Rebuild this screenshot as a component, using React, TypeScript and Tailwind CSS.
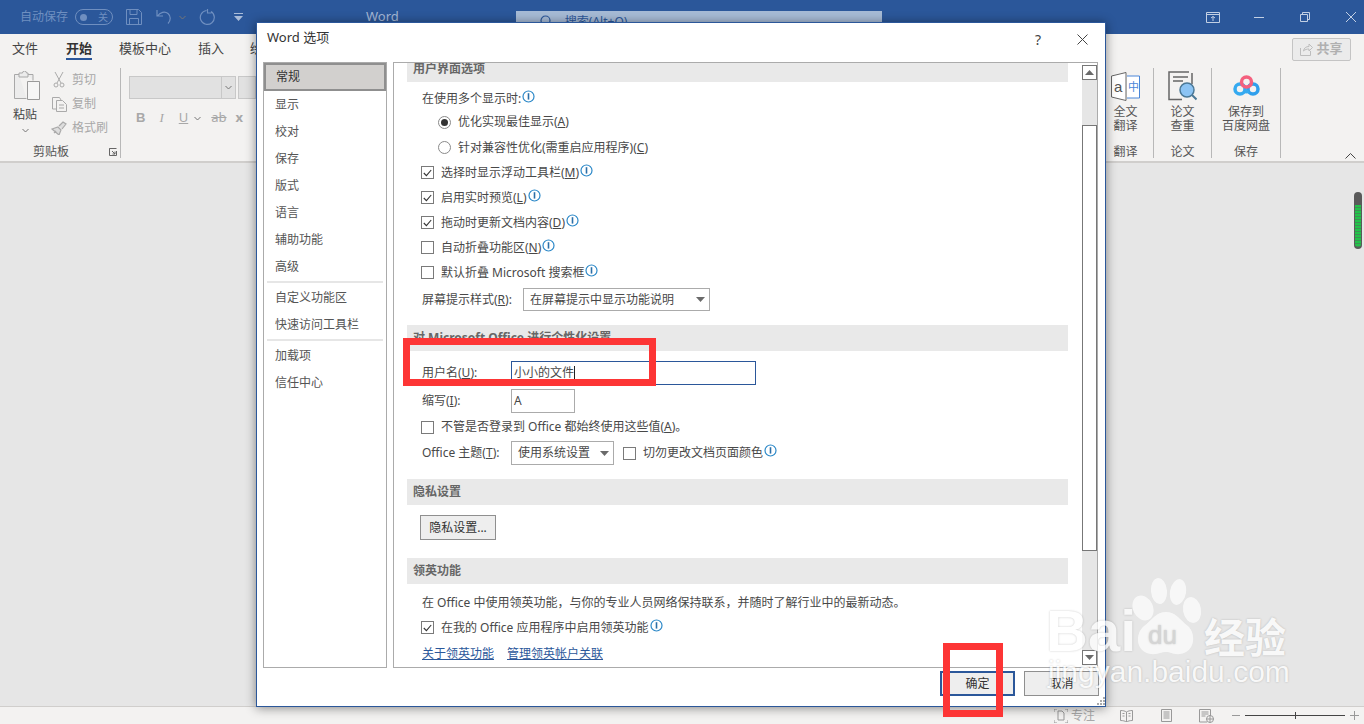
import React from "react";

const Info = () => (
	<svg width="13" height="13" viewBox="0 0 13 13" className="ml-[1px] mb-[5px] shrink-0">
		<circle cx="6.5" cy="6.5" r="5.5" fill="white" stroke="#2b88c8" strokeWidth="1.2" />
		<path d="M6.5 3.2v6.4" stroke="#2b6fa8" strokeWidth="1.6" />
	</svg>
);

const Caret = ({ color = "#6a6a6a", flip = false }: { color?: string; flip?: boolean }) => (
	<svg width="9" height="5" viewBox="0 0 9 5" className="shrink-0">
		<path d={flip ? "M4.5 0L9 5H0z" : "M0 0h9L4.5 5z"} fill={color} />
	</svg>
);

const Chevron = ({ className = "" }: { className?: string }) => (
	<svg width="7" height="5" viewBox="0 0 7 5" fill="none" stroke="#777" className={className}>
		<path d="M.5 1l3 3 3-3" />
	</svg>
);

const Check = ({ checked = false }: { checked?: boolean }) => (
	<span className="w-[13px] h-[13px] border border-[#7a7a7a] bg-white flex items-center justify-center shrink-0">
		{checked && (
			<svg width="9" height="8" viewBox="0 0 9 8" fill="none" stroke="#333" strokeWidth="1.1">
				<path d="M.8 4l2.6 2.6L8.2 1" />
			</svg>
		)}
	</span>
);

const Radio = ({ checked = false }: { checked?: boolean }) => (
	<span className="w-[13px] h-[13px] rounded-full border border-[#8a8a8a] bg-white flex items-center justify-center shrink-0">
		{checked && <span className="w-[7px] h-[7px] rounded-full bg-[#333]" />}
	</span>
);

const SectionHead = ({ title, className = "" }: { title: string; className?: string }) => (
	<div className={`h-[26px] ml-[13px] mr-[14px] pl-[6px] bg-[#e9e9e9] flex items-center font-bold text-[#666] ${className}`}>
		{title}
	</div>
);

const CheckRow = ({ label, checked, info = true, className = "" }: { label: React.ReactNode; checked?: boolean; info?: boolean; className?: string }) => (
	<div className={`h-[25px] pl-[27px] flex items-center ${className}`}>
		<Check checked={checked} />
		<span className="ml-[7px]">{label}</span>
		{info && <Info />}
	</div>
);

const Key = ({ children }: { children: React.ReactNode }) => <span className="underline">{children}</span>;

const navTop = ["显示", "校对", "保存", "版式", "语言", "辅助功能", "高级"];

const NavItem = ({ label }: { label: string }) => (
	<div className="h-[27px] pl-[11px] flex items-center text-[#555]">{label}</div>
);

const NavRule = () => <div className="h-[2px] mx-[3px] my-[1px] bg-[#e6e6e6]" />;

const RibbonGroup = ({ icon, lines, label, width }: { icon: React.ReactNode; lines: string[]; label: string; width: string }) => (
	<div className={`${width} h-[90px] border-r border-[#b8b8b8] flex flex-col items-center text-[#555]`}>
		<div className="h-[36px] flex items-center justify-center">{icon}</div>
		<div className="leading-[14px] text-center mt-[1px] h-[30px]">
			{lines.map((l) => (
				<div key={l}>{l}</div>
			))}
		</div>
		<div className="mt-auto leading-[14px] mb-[-1px]">{label}</div>
	</div>
);

const SmallGray = ({ icon, label }: { icon: React.ReactNode; label: string }) => (
	<div className="h-[24px] flex items-center text-[#a8a8a8]">
		<span className="w-[18px] flex justify-center">{icon}</span>
		<span className="ml-[4px]">{label}</span>
	</div>
);

const App = () => {
	return (
		<div className="relative w-[1364px] h-[724px] overflow-hidden flex flex-col bg-[#e6e6e6] text-[12px] font-['Noto_Sans','Noto_Sans_CJK_SC',sans-serif] text-[#484848]">
			{/* title bar */}
			<div className="h-[34px] shrink-0 bg-[#2b579a] flex items-center text-[#6f8fc0]">
				<span className="ml-[20px]">自动保存</span>
				<div className="ml-[7px] w-[38px] h-[16px] rounded-full border border-[#6f8fc0] flex items-center px-[4px]">
					<span className="w-[7px] h-[7px] rounded-full bg-[#6f8fc0]" />
					<span className="ml-auto text-[10px]">关</span>
				</div>
				<svg width="16" height="16" viewBox="0 0 16 16" fill="none" stroke="#6f8fc0" className="ml-[13px]">
					<path d="M.5.5h12l3 3v12H.5zM4 .5v5h7v-5M3.5 15.5v-6h9v6" />
				</svg>
				<svg width="20" height="16" viewBox="0 0 20 16" fill="none" stroke="#6f8fc0" strokeWidth="1.2" className="ml-[14px]">
					<path d="M1 1v6h6M1.5 7C4 3 9 2 12 4.500s3 7 0 10" />
				</svg>
				<Chevron className="ml-[3px]" />
				<svg width="17" height="17" viewBox="0 0 17 17" fill="none" stroke="#6f8fc0" strokeWidth="1.2" className="ml-[12px]">
					<path d="M13 2.500A7 7 0 1 1 8.500 1.500M9.500 0v4h4" />
				</svg>
				<svg width="9" height="8" viewBox="0 0 9 8" className="ml-[19px]" fill="#a9bcd9">
					<path d="M0 0h9v1H0zM0 3h9L4.500 8z" />
				</svg>
				<span className="ml-[123px] text-[13px] text-[#a5b8d6]">Word</span>
				<div className="ml-[117px] w-[366px] h-[22px] mt-[10px] bg-[#a7bbd6] flex items-center text-[#2b579a] pl-[21px]">
					<svg width="14" height="14" viewBox="0 0 14 14" fill="none" stroke="#2b579a" strokeWidth="1.2">
						<circle cx="8.500" cy="5.500" r="4.500" />
						<path d="M5.200 8.800L.8 13.200" />
					</svg>
					<span className="ml-[14px]">搜索(Alt+Q)</span>
				</div>
				<svg width="14" height="11" viewBox="0 0 14 11" fill="none" stroke="#c3d0e4" className="ml-[324px]">
					<path d="M.5.500h13v10H.5zM.5 2.500h13M7 9V4.500M5 6l2-1.500L9 6" />
				</svg>
				<div className="ml-[34px] w-[10px] h-[1px] bg-[#c3d0e4]" />
				<svg width="10" height="10" viewBox="0 0 10 10" fill="none" stroke="#c3d0e4" className="ml-[36px]">
					<path d="M.5 2.500h7v7h-7zM2.500 2.500v-2h7v7h-2" />
				</svg>
				<svg width="10" height="10" viewBox="0 0 10 10" fill="none" stroke="#c3d0e4" className="ml-[36px]">
					<path d="M0 0l10 10M10 0L0 10" />
				</svg>
			</div>

			{/* tabs */}
			<div className="h-[30px] shrink-0 bg-[#f3f2f1] flex items-center text-[13px] text-[#444] pl-[12px] pr-[13px]">
				<span>文件</span>
				<span className="ml-[28px] relative font-bold text-[#333] h-[30px] leading-[28px] border-b-2 border-transparent">
					开始
					<span className="absolute left-0 right-0 bottom-[2px] h-[2px] bg-[#2b579a]" />
				</span>
				<span className="ml-[27px]">模板中心</span>
				<span className="ml-[27px]">插入</span>
				<span className="ml-[26px]">绘图</span>
				<div className="ml-auto w-[59px] h-[23px] rounded-[2px] border border-[#c4c4c4] bg-[#ebebeb] flex items-center justify-center text-[#b0b0b0] gap-[3px]">
					<svg width="13" height="13" viewBox="0 0 13 13" fill="none" stroke="#bdbdbd">
						<path d="M.5 5v7.500h10V8M3.500 8C4 5 6 3.500 9 3.500V1l3.500 3.500L9 8V6C7 6 5 6.500 3.500 8z" />
					</svg>
					<span className="font-bold">共享</span>
				</div>
			</div>

			{/* ribbon */}
			<div className="h-[99px] shrink-0 bg-[#f3f2f1] border-b-2 border-[#d0cecc] flex pt-[4px]">
				<div className="w-[121px] h-[90px] border-r border-[#b8b8b8] relative flex">
					<div className="w-[50px] flex flex-col items-center text-[#444]">
						<svg width="28" height="30" viewBox="0 0 28 30" fill="none" stroke="#a8a8a8" className="ml-[4px] mt-[3px]">
							<path d="M6 3.500H1.500v24h12M15 3.500h5v6M6 2h3.500a2 2 0 0 1 4 0H15v4H6z" fill="#ececec" />
							<path d="M14.500 10.500h12v18h-12z" fill="#f6f6f6" stroke="#9a9a9a" />
						</svg>
						<span className="mt-[7px] leading-[14px]">粘贴</span>
						<Chevron className="mt-[6px]" />
					</div>
					<div className="pt-[-1px]">
						<SmallGray
							label="剪切"
							icon={
								<svg width="12" height="16" viewBox="0 0 12 16" fill="none" stroke="#aaa">
									<path d="M2 0l6 11M10 0L4 11" />
									<circle cx="3" cy="13" r="2" />
									<circle cx="9" cy="13" r="2" />
								</svg>
							}
						/>
						<SmallGray
							label="复制"
							icon={
								<svg width="15" height="15" viewBox="0 0 15 15" fill="none" stroke="#aaa">
									<path d="M4 12H.5V.5h7L9 3M4.500 3.500h6l4 4v7h-10zM7 8h5M7 11h5" />
								</svg>
							}
						/>
						<SmallGray
							label="格式刷"
							icon={
								<svg width="16" height="14" viewBox="0 0 16 14" fill="none" stroke="#aaa" strokeWidth="1.2">
									<path d="M1 8l6-2 3 3-2 5zM8 5l4-4 3 2-4 5M3 12l2-2" fill="#ddd" />
								</svg>
							}
						/>
						<div className="absolute left-0 right-0 bottom-0 flex justify-center text-[#555] leading-[14px] mb-[-1px]">
							<span className="ml-[-18px]">剪贴板</span>
						</div>
						<svg width="8" height="8" viewBox="0 0 8 8" fill="none" stroke="#666" className="absolute right-[3px] bottom-[2px]">
							<path d="M.5 3V.5H7.500M.5.500V7.500H7.500V3M3 3l3 3M6 3.500V6H3.500" />
						</svg>
					</div>
				</div>
				<div className="ml-[8px] flex flex-col">
					<div className="flex gap-[2px] mt-[8px]">
						<div className="w-[107px] h-[23px] bg-[#e1e1e1] border border-[#c8c8c8] flex">
							<div className="ml-auto w-[14px] border-l border-[#c8c8c8] flex items-center justify-center">
								<Chevron />
							</div>
						</div>
						<div className="w-[18px] h-[23px] bg-[#e1e1e1] border border-[#c8c8c8]" />
					</div>
					<div className="flex items-center mt-[8px] h-[22px] pl-[7px] text-[#a8a8a8] text-[13px]">
						<span className="font-bold font-['Liberation_Sans',sans-serif]">B</span>
						<span className="ml-[14px] italic font-['Liberation_Serif',serif]">I</span>
						<span className="ml-[15px] underline">U</span>
						<Chevron className="ml-[6px]" />
						<span className="ml-[10px] line-through">ab</span>
						<span className="ml-[9px] font-bold">x</span>
					</div>
				</div>
				<div className="ml-auto flex mr-[83px]">
					<RibbonGroup
						width="w-[56px]"
						lines={["全文", "翻译"]}
						label="翻译"
						icon={
							<svg width="29" height="29" viewBox="0 0 29 29" fill="none">
								<path d="M.5 4L15 .5v28L.5 25z" stroke="#666" fill="#fff" />
								<path d="M16 4h12.500v22H16" stroke="#4a86d8" fill="#fff" />
								<text x="3" y="20" fontSize="15" fill="#555" fontFamily="Liberation Sans, sans-serif">a</text>
								<text x="17" y="19" fontSize="11" fill="#4a86d8" fontFamily="Noto Sans CJK SC, sans-serif">中</text>
							</svg>
						}
					/>
					<RibbonGroup
						width="w-[58px]"
						lines={["论文", "查重"]}
						label="论文"
						icon={
							<svg width="29" height="30" viewBox="0 0 29 30" fill="none">
								<path d="M21 1H1v27.500h13M24 2v11" stroke="#666" strokeWidth="1.500" />
								<path d="M5 6h15M5 10h10" stroke="#666" strokeWidth="1.500" />
								<circle cx="19" cy="19" r="7" fill="#8cc4f4" stroke="#4a7896" strokeWidth="1.500" />
								<path d="M24 24l4.500 4.500" stroke="#4a7896" strokeWidth="2" />
							</svg>
						}
					/>
					<RibbonGroup
						width="w-[69px]"
						lines={["保存到", "百度网盘"]}
						label="保存"
						icon={
							<svg width="27" height="22" viewBox="0 0 27 22" fill="none" strokeWidth="3.500">
								<circle cx="7" cy="14" r="5" stroke="#35aaf0" />
								<circle cx="20" cy="14" r="5" stroke="#2f9fec" />
								<circle cx="13.500" cy="7" r="5" stroke="#f4607e" />
								<path d="M11 16a5 5 0 0 0 5 0" stroke="#35aaf0" />
							</svg>
						}
					/>
				</div>
				<svg width="11" height="6" viewBox="0 0 11 6" fill="none" stroke="#444" className="absolute left-[1345px] top-[153px]">
					<path d="M.5 5.500l5-5 5 5" />
				</svg>
			</div>

			<div className="flex-1" />

			{/* status bar */}
			<div className="h-[18px] shrink-0 bg-[#f3f2f1] border-t border-[#d0cecc] flex items-center text-[#a8a8a8]">
				<svg width="14" height="14" viewBox="0 0 14 14" fill="none" stroke="#999" className="ml-[1054px]">
					<path d="M0 3V0h3M11 0h3v3M0 11v3h3M11 14h3v-3M4 11V2h4l2 2v7z" />
				</svg>
				<span className="ml-[3px]">专注</span>
				<svg width="13" height="12" viewBox="0 0 13 12" fill="none" stroke="#999" className="ml-[25px]">
					<path d="M6.500 2C5 1 3 .5.500.5v10c2.500 0 4.500.5 6 1.500 1.500-1 3.500-1.500 6-1.500V.5C10 .5 8 1 6.500 2zM6.500 2v10M2.500 3.500h2M2.500 6h2M8.500 3.500h2M8.500 6h2" />
				</svg>
				<svg width="11" height="13" viewBox="0 0 11 13" fill="none" stroke="#999" className="ml-[28px]">
					<path d="M.5.500h10v12H.5zM2.500 3h6M2.500 5h6M2.500 7h6M2.500 9h6" />
				</svg>
				<svg width="15" height="14" viewBox="0 0 15 14" fill="none" stroke="#999" className="ml-[27px]">
					<path d="M8 13H.5V.5h11V7M2.500 3h7M2.500 5h7M2.500 7h4" />
					<circle cx="11" cy="10" r="3.500" />
					<path d="M7.500 10h7M11 6.500v7" />
				</svg>
				<div className="ml-[18px] w-[8px] h-[1px] bg-[#999]" />
				<div className="ml-[5px] w-[100px] h-[1px] bg-[#444] relative">
					<span className="absolute left-[50px] top-[-3px] w-[1px] h-[7px] bg-[#444]" />
				</div>
				<svg width="9" height="9" viewBox="0 0 9 9" stroke="#999" className="ml-[5px]">
					<path d="M0 4.500h9M4.500 0v9" />
				</svg>
			</div>

			{/* green meter at the right edge */}
			<div className="absolute left-[1354px] top-[192px] w-[8px] h-[57px] rounded-full bg-[#5a5a5a] pt-[13px] px-[1px] pb-[2px]">
				<div className="w-full h-full rounded-b-full bg-[repeating-linear-gradient(to_bottom,#22c24a_0,#22c24a_2px,#3f8f55_2px,#3f8f55_3px)]" />
			</div>

			{/* options dialog */}
			<div className="absolute left-[256px] top-[22px] w-[850px] h-[685px] bg-white border border-[#2b579a] shadow-[0_1px_10px_rgba(0,0,0,0.45)] flex flex-col">
				<div className="h-[39px] shrink-0 flex items-center pl-[10px] text-[13px] text-[#333]">
					<span className="mb-[9px]">Word 选项</span>
					<span className="ml-auto mb-[6px] mr-[36px] text-[14px] text-[#444]">?</span>
					<svg width="11" height="11" viewBox="0 0 11 11" fill="none" stroke="#444" className="mr-[17px] mb-[6px]">
						<path d="M.5.500l10 10M10.500.500l-10 10" />
					</svg>
				</div>
				<div className="h-[606px] shrink-0 flex pl-[6px]">
					{/* nav */}
					<div className="w-[124px] border border-[#ababab]">
						<div className="h-[28px] pl-[10px] flex items-center bg-[#d2d0ce] border-2 border-[#8f8f8f] text-[#333]">常规</div>
						{navTop.map((n) => (
							<NavItem key={n} label={n} />
						))}
						<NavRule />
						<NavItem label="自定义功能区" />
						<NavItem label="快速访问工具栏" />
						<NavRule />
						<NavItem label="加载项" />
						<NavItem label="信任中心" />
					</div>
					{/* content */}
					<div className="w-[705px] ml-[6px] border border-[#ababab] flex overflow-hidden">
						<div className="w-[688px] shrink-0 overflow-hidden">
							<SectionHead title="用户界面选项" className="mt-[-7px]" />
							<div className="h-[24px] mt-[5px] pl-[28px] flex items-center">
								在使用多个显示时:
								<Info />
							</div>
							<div className="h-[22px] pl-[44px] flex items-center">
								<Radio checked />
								<span className="ml-[7px]">
									优化实现最佳显示(<Key>A</Key>)
								</span>
							</div>
							<div className="h-[25px] mt-[2px] pl-[44px] flex items-center">
								<Radio />
								<span className="ml-[7px]">
									针对兼容性优化(需重启应用程序)(<Key>C</Key>)
								</span>
							</div>
							<CheckRow checked label={<>选择时显示浮动工具栏(<Key>M</Key>)</>} />
							<CheckRow checked label={<>启用实时预览(<Key>L</Key>)</>} />
							<CheckRow checked label={<>拖动时更新文档内容(<Key>D</Key>)</>} />
							<CheckRow label={<>自动折叠功能区(<Key>N</Key>)</>} />
							<CheckRow label="默认折叠 Microsoft 搜索框" />
							<div className="h-[25px] mt-[3px] pl-[28px] flex items-start">
								<span className="h-[23px] leading-[23px] w-[101px]">
									屏幕提示样式(<Key>R</Key>):
								</span>
								<div className="w-[187px] h-[23px] border border-[#ababab] flex items-center pl-[6px] pr-[4px]">
									在屏幕提示中显示功能说明
									<span className="ml-auto">
										<Caret />
									</span>
								</div>
							</div>
							<SectionHead title="对 Microsoft Office 进行个性化设置" className="mt-[12px]" />
							<div className="h-[24px] mt-[10px] pl-[28px] flex items-center">
								<span className="w-[89px]">
									用户名(<Key>U</Key>):
								</span>
								<div className="w-[245px] h-[24px] border border-[#2b579a] flex items-center pl-[2px]">
									小小的文件
									<span className="w-[1px] h-[14px] bg-[#222]" />
								</div>
							</div>
							<div className="h-[24px] mt-[4px] pl-[28px] flex items-center">
								<span className="w-[89px]">
									缩写(<Key>I</Key>):
								</span>
								<div className="w-[64px] h-[24px] border border-[#ababab] flex items-center pl-[2px]">A</div>
							</div>
							<CheckRow className="h-[26px] mt-[1px]" info={false} label={<>不管是否登录到 Office 都始终使用这些值(<Key>A</Key>)。</>} />
							<div className="h-[24px] mt-[1px] pl-[28px] flex items-center">
								<span className="w-[89px]">
									Office 主题(<Key>T</Key>):
								</span>
								<div className="w-[103px] h-[24px] border border-[#ababab] flex items-center pl-[6px] pr-[4px]">
									使用系统设置
									<span className="ml-auto">
										<Caret />
									</span>
								</div>
								<span className="ml-[9px]">
									<Check />
								</span>
								<span className="ml-[7px]">切勿更改文档页面颜色</span>
								<Info />
							</div>
							<SectionHead title="隐私设置" className="mt-[14px]" />
							<button className="block mt-[10px] ml-[26px] w-[76px] h-[25px] border border-[#8f8f8f] bg-[#eeeeee] text-[#333]">隐私设置...</button>
							<SectionHead title="领英功能" className="mt-[18px]" />
							<div className="h-[24px] mt-[7px] pl-[28px] flex items-center">在 Office 中使用领英功能，与你的专业人员网络保持联系，并随时了解行业中的最新动态。</div>
							<CheckRow className="h-[22px]" checked label="在我的 Office 应用程序中启用领英功能" />
							<div className="h-[24px] mt-[2px] pl-[28px] flex items-center text-[#2b579a] underline">
								<span>关于领英功能</span>
								<span className="ml-[13px]">管理领英帐户关联</span>
							</div>
						</div>
						<div className="w-[15px] shrink-0 mt-[2px] mb-[2px] bg-[#e6e6e6] flex flex-col">
							<div className="h-[15px] border border-[#777] bg-white flex items-center justify-center">
								<Caret flip />
							</div>
							<div className="h-[45px]" />
							<div className="h-[426px] border border-[#777] bg-white" />
							<div className="flex-1" />
							<div className="h-[15px] border border-[#777] bg-white flex items-center justify-center">
								<Caret />
							</div>
						</div>
					</div>
				</div>
				{/* footer */}
				<div className="flex justify-end mt-[3px] pr-[6px] gap-[9px] text-[#333]">
					<button className="w-[75px] h-[25px] border-2 border-[#2b579a] bg-[#eeeeee]">确定</button>
					<button className="w-[75px] h-[25px] border border-[#8f8f8f] bg-[#eeeeee]">取消</button>
				</div>
				<svg width="9" height="9" viewBox="0 0 9 9" fill="#aaa" className="absolute right-0 bottom-0">
					<path d="M7 0h2v2H7zM4 3h2v2H4zM7 3h2v2H7zM1 6h2v2H1zM4 6h2v2H4zM7 6h2v2H7z" />
				</svg>
			</div>

			{/* annotations */}
			<div className="absolute left-[403px] top-[338px] w-[253px] h-[48px] border-[7px] border-[#fd3535]" />
			<div className="absolute left-[943px] top-[643px] w-[60px] h-[74px] border-[7px] border-[#fd3535]" />

			{/* watermark */}
			<div className="absolute left-[1046px] top-[577px] w-[250px] pointer-events-none text-white [text-shadow:0_0_2px_rgba(0,0,0,0.3)] opacity-75">
				<div className="flex items-end h-[79px]">
					<span className="text-[58px] leading-[58px] font-bold font-['Liberation_Sans',sans-serif] mb-[-4px] w-[84px]">Bai</span>
					<svg width="74" height="78" viewBox="0 0 74 78" fill="white" className="opacity-95">
						<ellipse cx="13" cy="30" rx="10" ry="13" transform="rotate(-25 13 30)" />
						<ellipse cx="29" cy="13" rx="8" ry="13" transform="rotate(-5 29 13)" />
						<ellipse cx="48" cy="14" rx="8" ry="13" transform="rotate(10 48 14)" />
						<ellipse cx="62" cy="32" rx="9" ry="13" transform="rotate(-10 62 32)" />
						<path d="M36 34c10 0 14 8 22 14 8 7 8 26-8 28-7 1-9-2-14-2s-8 3-15 2C5 74 5 55 14 48c8-6 12-14 22-14z" />
						<text x="18" y="66" fontSize="26" fill="#cfcfcf" fontFamily="Liberation Sans, sans-serif">du</text>
					</svg>
					<span className="text-[41px] leading-[41px] font-bold font-['Noto_Sans_CJK_SC',sans-serif]">经验</span>
				</div>
				<div className="text-[30px] leading-[34px] mt-[-1px] ml-[2px] font-['Liberation_Sans',sans-serif] whitespace-nowrap">jingyan.baidu.com</div>
			</div>
		</div>
	);
};

export default App;
